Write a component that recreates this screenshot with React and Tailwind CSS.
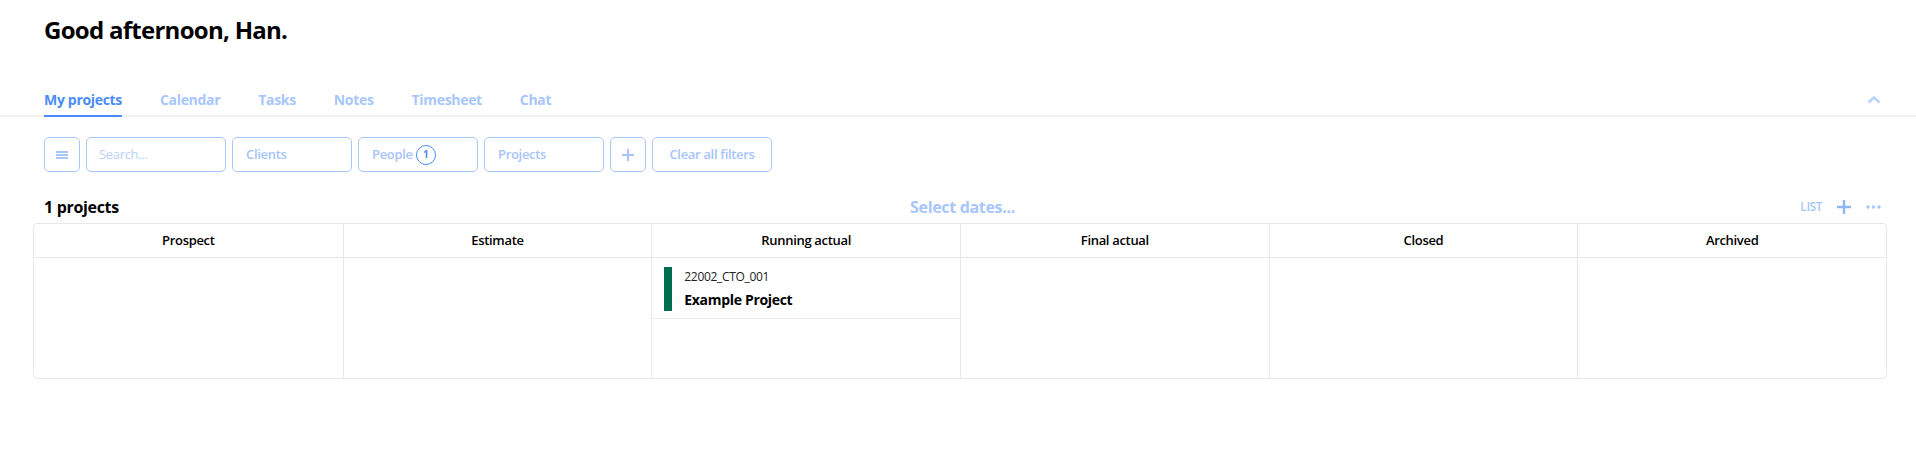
import { useState } from "react";

const TABS = ["My projects", "Calendar", "Tasks", "Notes", "Timesheet", "Chat"];
const STAGES = ["Prospect", "Estimate", "Running actual", "Final actual", "Closed", "Archived"];

function FilterBox({ className = "", children }) {
  return (
    <div
      className={`h-[35px] flex items-center rounded-[5px] border border-[#a9c7fb] bg-white text-[13px] font-semibold text-[#a6c4fa] ${className}`}
    >
      {children}
    </div>
  );
}

function ProjectCard() {
  return (
    <div className="flex items-stretch gap-[12px] pl-[12px] pt-[9px] pb-[7px] border-b border-[#ebebeb]">
      <div className="w-[8px] h-[44px] bg-[#006e4e]" />
      <div className="flex flex-col justify-center">
        <div className="text-[12px] leading-[16px] text-[#222]">22002_CTO_001</div>
        <div className="text-[14px] leading-[20px] font-bold text-black mt-[5px]">Example Project</div>
      </div>
    </div>
  );
}

export default function App() {
  const [activeTab, setActiveTab] = useState("My projects");

  return (
    <div className="w-[1916px] h-[461px] bg-white font-['Open_Sans',sans-serif] tracking-[-0.02em]">
      {/* Greeting */}
      <div className="pl-[44px] pt-[14px]">
        <h1 className="text-[24px] leading-[32px] font-bold text-black tracking-[-0.03em]">Good afternoon, Han.</h1>
      </div>

      {/* Tabs */}
      <div className="mt-[44px] flex items-end justify-between border-b-2 border-[#f3f3f3] pl-[44px] pr-[35px]">
        <div className="flex gap-[38px]">
          {TABS.map((t) => (
            <button
              key={t}
              onClick={() => setActiveTab(t)}
              className={`-mb-[2px] pb-[5px] text-[14px] leading-[20px] font-bold border-b-2 ${
                activeTab === t ? "text-[#4a8cf7] border-[#4a8cf7]" : "text-[#a8c6fb] border-transparent"
              }`}
            >
              {t}
            </button>
          ))}
        </div>
        <svg width="14" height="8" viewBox="0 0 14 8" className="mb-[11px]">
          <path d="M1.5 6.5 L7 1.5 L12.5 6.5" fill="none" stroke="#bcd4fc" strokeWidth="2.8" />
        </svg>
      </div>

      {/* Filters */}
      <div className="mt-[20px] pl-[44px] flex gap-[6px]">
        <FilterBox className="w-[36px] justify-center">
          <svg width="12" height="8" viewBox="0 0 12 8">
            <path d="M0 1h12M0 4h12M0 7h12" stroke="#8fb5f8" strokeWidth="1.6" />
          </svg>
        </FilterBox>
        <FilterBox className="w-[140px] px-[12px]">
          <span className="font-normal text-[#b9d1fb]">Search...</span>
        </FilterBox>
        <FilterBox className="w-[120px] px-[13px]">Clients</FilterBox>
        <FilterBox className="w-[120px] px-[13px] gap-[3px]">
          People
          <span className="w-[20px] h-[20px] rounded-full border-[1.5px] border-[#4a8cf7] text-[#4a8cf7] text-[10px] font-bold flex items-center justify-center">
            1
          </span>
        </FilterBox>
        <FilterBox className="w-[120px] px-[13px]">Projects</FilterBox>
        <FilterBox className="w-[36px] justify-center">
          <svg width="12" height="12" viewBox="0 0 12 12">
            <path d="M6 0v12M0 6h12" stroke="#a6c4fa" strokeWidth="2" />
          </svg>
        </FilterBox>
        <FilterBox className="w-[120px] justify-center">Clear all filters</FilterBox>
      </div>

      {/* Summary row */}
      <div className="mt-[23px] pl-[44px] pr-[35px] grid grid-cols-3 items-center h-[24px]">
        <div className="text-[16px] font-bold text-black">1 projects</div>
        <div className="text-center text-[16px] font-bold text-[#a8c6fb]">Select dates...</div>
        <div className="flex justify-end items-center gap-[15px]">
          <span className="text-[12px] font-semibold text-[#a8c6fb] tracking-[-0.04em]">LIST</span>
          <svg width="14" height="14" viewBox="0 0 14 14">
            <path d="M7 0v14M0 7h14" stroke="#8fb5f8" strokeWidth="2.4" />
          </svg>
          <svg width="15" height="4" viewBox="0 0 15 4">
            <circle cx="2" cy="2" r="1.7" fill="#a8c6fb" />
            <circle cx="7.5" cy="2" r="1.7" fill="#a8c6fb" />
            <circle cx="13" cy="2" r="1.7" fill="#a8c6fb" />
          </svg>
        </div>
      </div>

      {/* Board */}
      <div className="mt-[4px] ml-[33px] mr-[29px] border border-[#e8e8e8] rounded-[4px] grid grid-cols-6">
        {STAGES.map((s, i) => (
          <div key={s} className={`flex flex-col ${i > 0 ? "border-l border-[#e8e8e8]" : ""}`}>
            <div className="h-[34px] flex items-center justify-center border-b border-[#e8e8e8] text-[13px] font-semibold text-black">
              {s}
            </div>
            <div className="h-[120px]">{s === "Running actual" && <ProjectCard />}</div>
          </div>
        ))}
      </div>
    </div>
  );
}
